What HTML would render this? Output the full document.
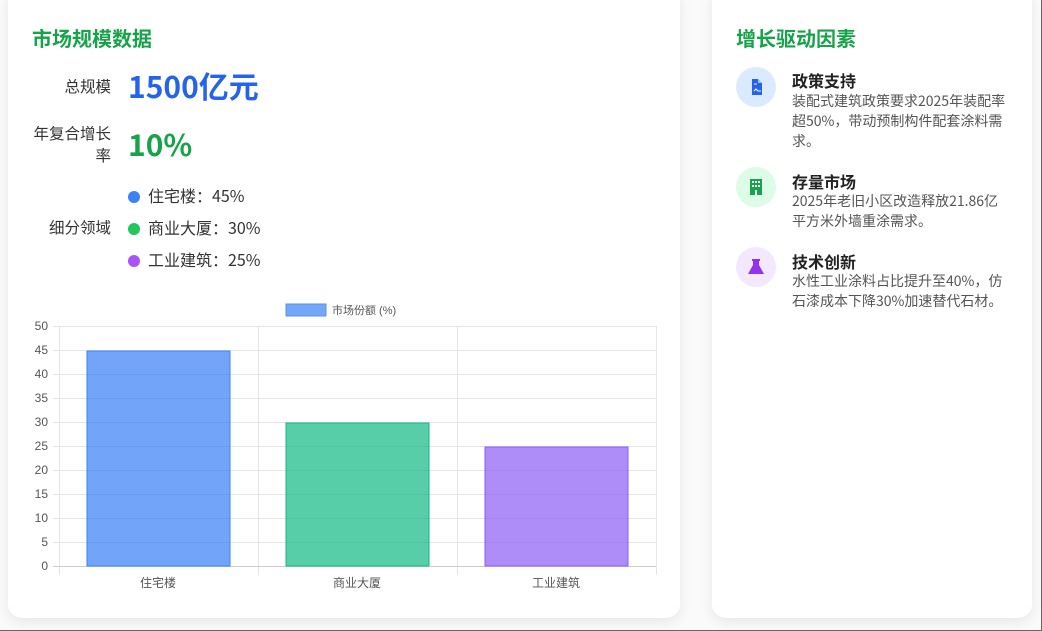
<!DOCTYPE html>
<html><head><meta charset="utf-8"><style>
*{margin:0;padding:0;box-sizing:border-box}
body{width:1042px;height:631px;background:#fafafa;font-family:"Liberation Sans","Noto Sans CJK SC",sans-serif;position:relative;overflow:hidden;border-right:1px solid #666;border-bottom:1px solid #666}
.card{position:absolute;background:#fff;border-radius:14px;box-shadow:0 4px 12px rgba(0,0,0,.08)}
h2{position:absolute;font-size:20px;font-weight:700;color:#16a34a;font-family:"Noto Sans CJK SC",sans-serif}
.lab{position:absolute;font-size:15.5px;color:#333;text-align:right;width:80px;font-family:"Noto Sans CJK SC",sans-serif;line-height:22px}
.big{position:absolute;font-size:30px;font-weight:700;font-family:"Noto Sans CJK SC",sans-serif}
.li{position:absolute;left:128px;font-size:16px;color:#333;font-family:"Noto Sans CJK SC",sans-serif}
.li i{display:inline-block;width:12px;height:12px;border-radius:50%;margin-right:8px;vertical-align:-1px}
.ic{position:absolute;left:736px;width:40px;height:40px;border-radius:50%}
.t{position:absolute;left:792px;font-size:16px;font-weight:700;color:#222;font-family:"Noto Sans CJK SC",sans-serif}
.d{position:absolute;left:792px;width:218px;font-size:14px;line-height:20px;color:#555;font-family:"Noto Sans CJK SC",sans-serif}
svg text{font-family:"Liberation Sans","Noto Sans CJK SC",sans-serif;font-size:12px;fill:#555}
</style></head><body>
<div class="card" style="left:8px;top:-14px;width:672px;height:632px"></div>
<div class="card" style="left:712px;top:-14px;width:320px;height:632px"></div>
<h2 style="left:32px;top:23px">市场规模数据</h2>
<div class="lab" style="left:31px;top:75px">总规模</div>
<div class="big" style="left:128px;top:63px;color:#2563eb">1500亿元</div>
<div class="lab" style="left:31px;top:122px">年复合增长率</div>
<div class="big" style="left:128px;top:121px;color:#16a34a">10%</div>
<div class="lab" style="left:31px;top:216px">细分领域</div>
<div class="li" style="top:183px"><i style="background:#3b82f6"></i>住宅楼：45%</div>
<div class="li" style="top:215px"><i style="background:#22c55e"></i>商业大厦：30%</div>
<div class="li" style="top:247px"><i style="background:#a855f7"></i>工业建筑：25%</div>
<svg style="position:absolute;left:0;top:0" width="680" height="631">
<rect x="286" y="304" width="40" height="12" fill="rgba(59,130,246,.7)" stroke="#5b8ff5"/>
<text x="332" y="314" style="font-size:11px">市场份额 (%)</text>
<g stroke="#e5e5e5" stroke-width="1">
<line x1="53" y1="326.5" x2="656" y2="326.5"/><line x1="53" y1="350.5" x2="656" y2="350.5"/><line x1="53" y1="374.5" x2="656" y2="374.5"/><line x1="53" y1="398.5" x2="656" y2="398.5"/><line x1="53" y1="422.5" x2="656" y2="422.5"/><line x1="53" y1="446.5" x2="656" y2="446.5"/><line x1="53" y1="470.5" x2="656" y2="470.5"/><line x1="53" y1="494.5" x2="656" y2="494.5"/><line x1="53" y1="518.5" x2="656" y2="518.5"/><line x1="53" y1="542.5" x2="656" y2="542.5"/>
<line x1="59.5" y1="326" x2="59.5" y2="575"/><line x1="258.5" y1="326" x2="258.5" y2="575"/><line x1="457.5" y1="326" x2="457.5" y2="575"/><line x1="656.5" y1="326" x2="656.5" y2="575"/>
</g>
<line x1="53" y1="566.5" x2="656" y2="566.5" stroke="#ccc"/>
<rect x="87" y="351" width="143" height="215" fill="rgba(59,130,246,.72)" stroke="#3b82f6"/>
<rect x="286" y="423" width="143" height="143" fill="rgba(16,185,129,.7)" stroke="#10b981"/>
<rect x="485" y="447" width="143" height="119" fill="rgba(139,92,246,.7)" stroke="#8b5cf6"/>
<g text-anchor="end"><text x="48" y="330">50</text><text x="48" y="354">45</text><text x="48" y="378">40</text><text x="48" y="402">35</text><text x="48" y="426">30</text><text x="48" y="450">25</text><text x="48" y="474">20</text><text x="48" y="498">15</text><text x="48" y="522">10</text><text x="48" y="546">5</text><text x="48" y="570">0</text></g>
<g text-anchor="middle"><text x="158" y="587">住宅楼</text><text x="357" y="587">商业大厦</text><text x="556" y="587">工业建筑</text></g>
</svg>
<h2 style="left:736px;top:23px">增长驱动因素</h2>
<div class="ic" style="top:67px;background:#dbeafe"><svg width="40" height="40"><path d="M16 12h6l4 4v12h-10z" fill="#2563eb"/><path d="M22 12v4h4" fill="#93c5fd"/><line x1="18" y1="17" x2="21" y2="17" stroke="#fff"/><path d="M18 24l2-2 2 2 3 0" stroke="#fff" fill="none"/></svg></div>
<div class="ic" style="top:167px;background:#dcfce7"><svg width="40" height="40"><rect x="14" y="12" width="12" height="16" fill="#16a34a"/><g fill="#fff"><rect x="16" y="14" width="2" height="2"/><rect x="19" y="14" width="2" height="2"/><rect x="22" y="14" width="2" height="2"/><rect x="16" y="18" width="2" height="2"/><rect x="19" y="18" width="2" height="2"/><rect x="22" y="18" width="2" height="2"/><rect x="19" y="23" width="2" height="5"/></g></svg></div>
<div class="ic" style="top:247px;background:#f3e8ff"><svg width="40" height="40"><path d="M16 12h8v2h-1v4l5 9h-16l5-9v-4h-1z" fill="#9333ea"/></svg></div>
<div class="t" style="top:68px">政策支持</div>
<div class="d" style="top:91px">装配式建筑政策要求2025年装配率超50%，带动预制构件配套涂料需求。</div>
<div class="t" style="top:169px">存量市场</div>
<div class="d" style="top:191px">2025年老旧小区改造释放21.86亿平方米外墙重涂需求。</div>
<div class="t" style="top:249px">技术创新</div>
<div class="d" style="top:271px">水性工业涂料占比提升至40%，仿石漆成本下降30%加速替代石材。</div>
</body></html>
